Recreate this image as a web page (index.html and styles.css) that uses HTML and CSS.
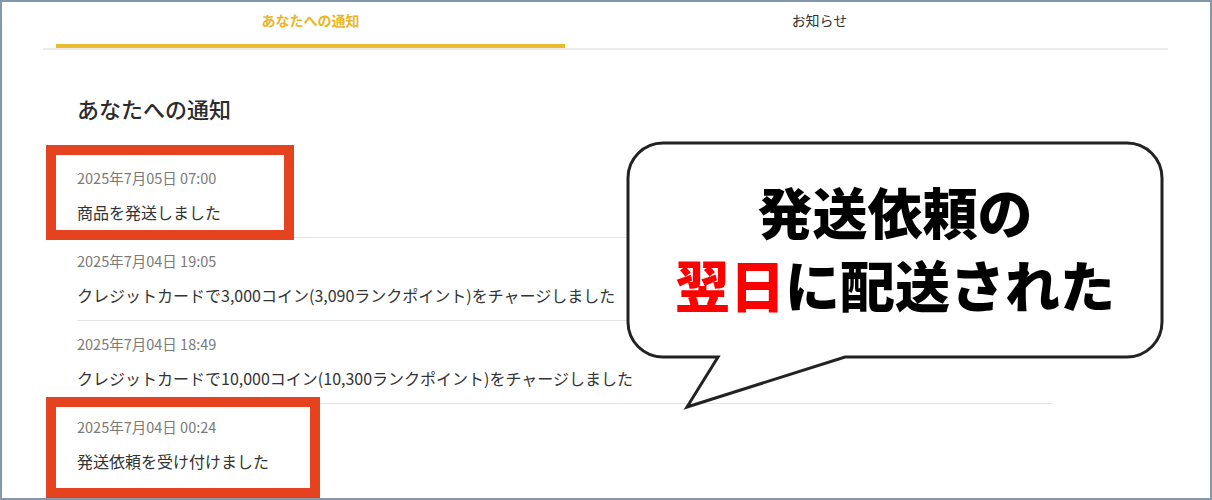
FILE: index.html
```html
<!DOCTYPE html>
<html lang="ja">
<head>
<meta charset="utf-8">
<title>あなたへの通知</title>
<link rel="stylesheet" href="styles.css">
</head>
<body>
<div class="frame">
  <nav class="tabs">
    <div class="tab tab-active">あなたへの通知</div>
    <div class="tab">お知らせ</div>
  </nav>
  <main class="content">
    <h1 class="title">あなたへの通知</h1>
    <ul class="list">
      <li class="item">
        <div class="date">2025年7月05日 07:00</div>
        <div class="msg">商品を発送しました</div>
      </li>
      <li class="item">
        <div class="date">2025年7月04日 19:05</div>
        <div class="msg">クレジットカードで3,000コイン(3,090ランクポイント)をチャージしました</div>
      </li>
      <li class="item">
        <div class="date">2025年7月04日 18:49</div>
        <div class="msg">クレジットカードで10,000コイン(10,300ランクポイント)をチャージしました</div>
      </li>
      <li class="item item-last">
        <div class="date">2025年7月04日 00:24</div>
        <div class="msg">発送依頼を受け付けました</div>
      </li>
    </ul>
  </main>

  <div class="mark mark-1"></div>
  <div class="mark mark-2"></div>

  <div class="bubble">
    <svg class="bubble-shape" width="550" height="280" viewBox="0 0 550 280">
      <path d="M 43 8 H 507 A 35 35 0 0 1 542 43 V 187 A 35 35 0 0 1 507 222 H 225 L 67 272 L 98 222 H 43 A 35 35 0 0 1 8 187 V 43 A 35 35 0 0 1 43 8 Z" fill="#fff" stroke="#222" stroke-width="3" stroke-linejoin="miter"/>
    </svg>
    <div class="bubble-text">
      <div class="bubble-line">発送依頼の</div>
      <div class="bubble-line"><span class="red">翌日</span>に配送された</div>
    </div>
  </div>
</div>
</body>
</html>
```

FILE: styles.css
```css
* { box-sizing: border-box; }

html, body {
  margin: 0;
  padding: 0;
  background: #fff;
}

body {
  font-family: "Noto Sans CJK JP", "Noto Sans", sans-serif;
  color: #333;
}

.frame {
  position: relative;
  width: 1212px;
  height: 500px;
  border: 2px solid #8597ae;
  overflow: hidden;
  background: #fff;
}

.tabs {
  display: flex;
  margin-left: 41px;
  width: 1125px;
  padding-left: 13px;
  border-bottom: 2px solid #ebebeb;
}

.tab {
  width: 509px;
  padding-top: 8px;
  height: 46px;
  font-size: 14px;
  line-height: 20px;
  text-align: center;
  color: #333;
  border-bottom: 4px solid transparent;
}

.tab-active {
  color: #e9b629;
  font-weight: 700;
  border-bottom-color: #ebbb2f;
}

.content {
  padding-left: 75px;
}

.title {
  margin: 43px 0 0;
  font-size: 22px;
  line-height: 30px;
  font-weight: 500;
  color: #2b2b2b;
}

.list {
  list-style: none;
  margin: 32px 0 0;
  padding: 0;
  width: 976px;
}

.item {
  padding: 13px 0 14px;
  border-bottom: 1px solid #e4e4e4;
  height: 83px;
}

.item-last {
  border-bottom: none;
}

.date {
  font-size: 14.5px;
  line-height: 20px;
  color: #7a7a7a;
}

.msg {
  margin-top: 12px;
  font-size: 16px;
  line-height: 24px;
  color: #333;
}

.mark {
  position: absolute;
  border: 10px solid #e5431f;
}

.mark-1 {
  left: 44px;
  top: 143px;
  width: 248px;
  height: 95px;
}

.mark-2 {
  left: 44px;
  top: 395px;
  width: 274px;
  height: 101px;
}

.bubble {
  position: absolute;
  left: 618px;
  top: 133px;
  width: 550px;
  height: 280px;
}

.bubble-shape {
  position: absolute;
  left: 0;
  top: 0;
}

.bubble-text {
  position: absolute;
  left: 8px;
  top: 5px;
  width: 534px;
  height: 214px;
  display: flex;
  flex-direction: column;
  justify-content: center;
  align-items: center;
}

.bubble-line {
  font-size: 55px;
  line-height: 73px;
  font-weight: 900;
  color: #000;
  white-space: nowrap;
}

.red {
  color: #ff0000;
}
```
